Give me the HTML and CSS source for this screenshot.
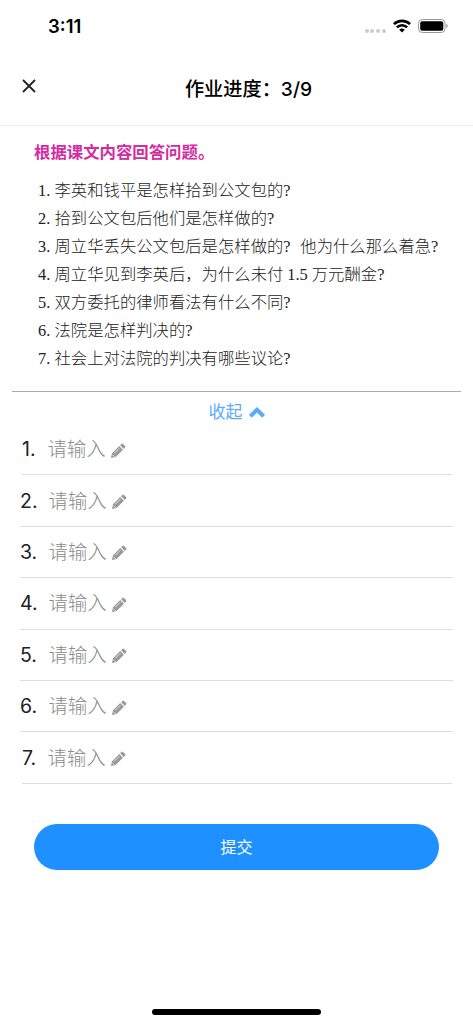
FILE: index.html
```
<!DOCTYPE html>
<html lang="zh-CN">
<head>
  <meta charset="UTF-8" />
  <meta name="viewport" content="width=device-width, initial-scale=1.0" />
  <title>作业进度</title>
  <link rel="stylesheet" href="styles.css">
</head>
<body>
  <svg class="sprite">
    <symbol id="pencil" viewBox="0 0 16 16">
      <path fill="currentColor" d="M1 15l.9-4.6L9.2 3.1l3.7 3.7-7.3 7.3zM10.1 2.2l1.3-1.3q.8-.7 1.6 0l2.1 2.1q.7.8 0 1.6l-1.3 1.3z"/>
      <path fill="none" stroke="#fff" stroke-width=".7" d="M4.4 10.2l5-5M2.3 11.6l2.2 2.2"/>
    </symbol>
  </svg>

  <div class="status-bar">
    <span class="time">3:11</span>
    <div class="status-icons">
      <div class="dots"><i></i><i></i><i></i><i></i></div>
      <svg class="wifi" viewBox="0 0 18 14">
        <path fill="none" stroke="#000" stroke-width="2.6" d="M.9 5.2a11.5 11.5 0 0 1 16.2 0M3.9 8.4a7.2 7.2 0 0 1 10.2 0"/>
        <path d="M6.2 10.8a4 4 0 0 1 5.6 0L9 13.6z"/>
      </svg>
      <svg class="battery" viewBox="0 0 30 14">
        <rect x=".5" y=".5" width="26.5" height="13" rx="3.8" fill="none" stroke="#999"/>
        <rect x="2.2" y="2.2" width="23.1" height="9.6" rx="2"/>
        <path fill="#999" d="M28.3 4.8q1.5.7 1.5 2.2t-1.5 2.2z"/>
      </svg>
    </div>
  </div>

  <div class="nav">
    <svg class="close" viewBox="0 0 14 14"><path d="M1 1l12 12M13 1L1 13"/></svg>
    <h1>作业进度：3/9</h1>
  </div>

  <div class="passage">
    <h2>根据课文内容回答问题。</h2>
    <p><b>1.</b>李英和钱平是怎样拾到公文包的?</p>
    <p><b>2.</b>拾到公文包后他们是怎样做的?</p>
    <p><b>3.</b>周立华丢失公文包后是怎样做的<span class="mark">?</span>他为什么那么着急?</p>
    <p><b>4.</b>周立华见到李英后，为什么未付<span class="num">1.5</span>万元酬金?</p>
    <p><b>5.</b>双方委托的律师看法有什么不同?</p>
    <p><b>6.</b>法院是怎样判决的?</p>
    <p><b>7.</b>社会上对法院的判决有哪些议论?</p>
  </div>

  <div class="toggle">
    <span>收起</span>
    <svg viewBox="0 0 16 12"><path d="M1.3 10.2L8 3.7l6.7 6.5"/></svg>
  </div>

  <div class="answers">
    <div class="row narrow"><span class="no">1.</span><span class="hint">请输入</span><svg><use href="#pencil"/></svg></div>
    <div class="row"><span class="no">2.</span><span class="hint">请输入</span><svg><use href="#pencil"/></svg></div>
    <div class="row"><span class="no">3.</span><span class="hint">请输入</span><svg><use href="#pencil"/></svg></div>
    <div class="row"><span class="no">4.</span><span class="hint">请输入</span><svg><use href="#pencil"/></svg></div>
    <div class="row"><span class="no">5.</span><span class="hint">请输入</span><svg><use href="#pencil"/></svg></div>
    <div class="row"><span class="no">6.</span><span class="hint">请输入</span><svg><use href="#pencil"/></svg></div>
    <div class="row narrow"><span class="no">7.</span><span class="hint">请输入</span><svg><use href="#pencil"/></svg></div>
  </div>

  <button class="submit">提交</button>
  <div class="home-bar"></div>
</body>
</html>
```
FILE: styles.css
```
* {
  box-sizing: border-box;
}

body {
  margin: 0;
  height: 1024px;
  display: flex;
  flex-direction: column;
  overflow: hidden;
  background: #fff;
  color: #000;
  font-family: Inter, "Noto Sans CJK SC", sans-serif;
}

svg {
  display: block;
  flex: none;
}

.sprite {
  display: none;
}

.status-bar {
  height: 50px;
  padding: 2px 25px 0 48px;
  display: flex;
  align-items: center;
  justify-content: space-between;
  flex: none;
}

.time {
  font-size: 18.5px;
  font-weight: 600;
}

.status-icons {
  display: flex;
  align-items: center;
}

.dots {
  display: flex;
  gap: 1.8px;
  margin: 9px 7px 0 0;
}

.dots i {
  width: 4px;
  height: 4px;
  border-radius: 50%;
  background: #ccc;
}

.wifi {
  width: 18px;
  height: 14px;
  margin-right: 7px;
}

.battery {
  width: 30px;
  height: 14px;
}

.nav {
  height: 76px;
  padding: 0 22px;
  display: grid;
  grid-template-columns: 40px 1fr 16px;
  border-bottom: 1px solid #ededed;
  flex: none;
}

.close {
  width: 14px;
  height: 14px;
  margin-top: 29px;
  fill: none;
  stroke: #222;
  stroke-width: 1.8;
}

.nav h1 {
  margin: 25px 0 0;
  font-size: 19.2px;
  line-height: 28px;
  font-weight: 500;
  text-align: center;
}

.passage {
  height: 266px;
  margin: 0 12px;
  padding: 11px 0 0 22px;
  border-bottom: 1px solid #aaa;
  white-space: nowrap;
  flex: none;
}

.passage h2 {
  margin: 0 0 12px;
  font-family: "Noto Sans CJK SC", sans-serif;
  font-size: 16.4px;
  line-height: 28px;
  font-weight: 700;
  color: #d42ba2;
}

.passage p {
  margin: 0 0 0 4px;
  font-family: "Liberation Serif", "Noto Sans CJK SC", serif;
  font-size: 16.35px;
  line-height: 28px;
  font-weight: 300;
  color: #222;
}

.passage b {
  display: inline-block;
  width: 16.5px;
  font-weight: 400;
}

.mark {
  display: inline-block;
  width: 17px;
}

.num {
  margin: 0 4px;
}

.toggle {
  height: 32px;
  padding-top: 7px;
  display: flex;
  justify-content: center;
  gap: 6px;
  color: #58abff;
  font-size: 17px;
  line-height: 26px;
  flex: none;
}

.toggle svg {
  width: 16px;
  height: 12px;
  margin-top: 7px;
  fill: none;
  stroke: currentColor;
  stroke-width: 4;
}

.answers {
  padding: 0 20px;
  flex: none;
}

.row {
  height: 51.4px;
  display: flex;
  align-items: center;
  border-bottom: 1px solid #dedede;
}

.row.narrow {
  margin: 0 1px 0 2px;
}

.no {
  width: 28.5px;
  font-size: 19.5px;
  color: #222;
}

.narrow .no {
  width: 25.5px;
}

.hint {
  font-size: 19.4px;
  font-weight: 300;
  line-height: 28px;
  color: #8c8c8c;
}

.row svg {
  width: 16px;
  height: 16px;
  margin: 3px 0 0 4px;
  color: #999;
}

.submit {
  height: 46px;
  margin: 40px 34px 0;
  padding: 0 0 2px;
  border: none;
  border-radius: 23px;
  background: #1e90ff;
  color: #fff;
  font-family: inherit;
  font-size: 16px;
  flex: none;
}

.home-bar {
  width: 169px;
  height: 6px;
  margin: auto auto 9px;
  border-radius: 3px;
  background: #000;
}
```
